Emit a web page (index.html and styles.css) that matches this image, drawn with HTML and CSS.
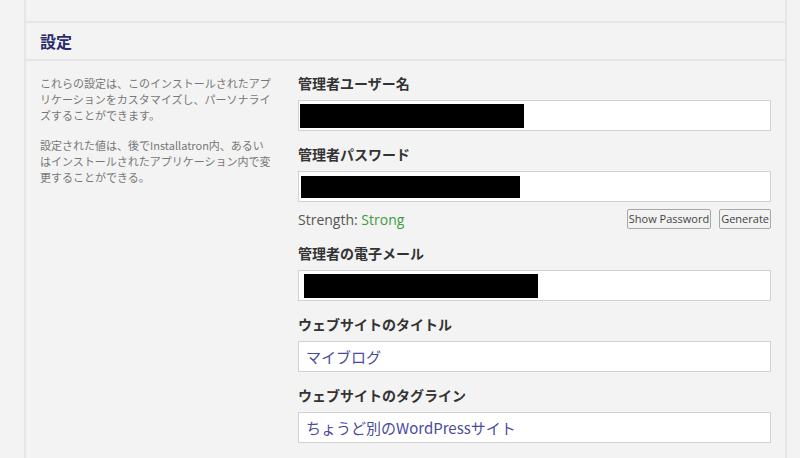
FILE: index.html
```html
<!DOCTYPE html>
<html lang="ja">
<head>
  <meta charset="UTF-8" />
  <meta name="viewport" content="width=device-width, initial-scale=1.0" />
  <title>設定</title>
  <link rel="stylesheet" href="styles.css">
</head>
<body>
  <div class="panel">
    <div class="prev-section"></div>
    <div class="section-head">
      <h2>設定</h2>
    </div>
    <div class="section-body">
      <div class="desc">
        <p>これらの設定は、このインストールされたアプリケーションをカスタマイズし、パーソナライズすることができます。</p>
        <p>設定された値は、後でInstallatron内、あるいはインストールされたアプリケーション内で変更することができる。</p>
      </div>
      <div class="form">
        <div class="field">
          <label class="field-label">管理者ユーザー名</label>
          <div class="field-input"><span class="redact redact-user"></span></div>
        </div>
        <div class="field">
          <label class="field-label">管理者パスワード</label>
          <div class="field-input"><span class="redact redact-pass"></span></div>
          <div class="strength-row">
            <span class="strength">Strength: <span class="strong">Strong</span></span>
            <div class="pw-buttons">
              <button class="small-btn">Show Password</button>
              <button class="small-btn">Generate</button>
            </div>
          </div>
        </div>
        <div class="field">
          <label class="field-label">管理者の電子メール</label>
          <div class="field-input"><span class="redact redact-mail"></span></div>
        </div>
        <div class="field">
          <label class="field-label">ウェブサイトのタイトル</label>
          <div class="field-input">マイブログ</div>
        </div>
        <div class="field">
          <label class="field-label">ウェブサイトのタグライン</label>
          <div class="field-input">ちょうど別のWordPressサイト</div>
        </div>
      </div>
    </div>
  </div>
</body>
</html>
```

FILE: styles.css
```css
* {
  box-sizing: border-box;
  margin: 0;
  padding: 0;
}
body {
  background-color: #f3f3f3;
  color: #333;
  font-family: 'Open Sans', 'Noto Sans CJK JP', sans-serif;
  overflow: hidden;
}
.panel {
  margin-left: 24px;
  width: 763px;
  min-height: 458px;
  border-left: 2px solid #e6e6e6;
  border-right: 2px solid #e6e6e6;
}
.prev-section {
  height: 23px;
  border-bottom: 2px solid #e6e6e6;
}
.section-head {
  height: 38px;
  padding-left: 14px;
  display: flex;
  align-items: center;
  border-bottom: 2px solid #e6e6e6;
}
.section-head h2 {
  font-family: 'Noto Sans CJK JP', sans-serif;
  font-size: 16px;
  font-weight: bold;
  color: #2b2b6c;
}
.section-body {
  display: flex;
  padding: 12px 14px 0 14px;
}
.desc {
  width: 232px;
  margin-right: 26px;
  flex-shrink: 0;
  font-family: 'Noto Sans CJK JP', sans-serif;
  font-size: 11px;
  line-height: 16px;
  color: #777;
  padding-top: 2px;
}
.desc p {
  margin-bottom: 14px;
}
.form {
  flex: 1;
}
.field {
  margin-bottom: 13px;
}
.field-label {
  display: block;
  font-family: 'Noto Sans CJK JP', sans-serif;
  font-size: 14px;
  font-weight: bold;
  line-height: 20px;
  color: #333;
  margin-bottom: 7px;
}
.field-input {
  height: 31px;
  background-color: #fff;
  border: 1px solid #d2d2d2;
  display: flex;
  align-items: center;
  padding-left: 7px;
  font-family: 'Noto Sans CJK JP', sans-serif;
  font-size: 15px;
  color: #4a4a9e;
}
.redact {
  display: block;
  background-color: #000;
}
.redact-user {
  width: 224px;
  height: 24px;
  margin-left: -6px;
}
.redact-pass {
  width: 219px;
  height: 22px;
  margin-left: -5px;
}
.redact-mail {
  width: 234px;
  height: 24px;
  margin-left: -2px;
}
.strength-row {
  display: flex;
  justify-content: space-between;
  align-items: center;
  height: 22px;
  margin-top: 6px;
  margin-bottom: 1px;
}
.strength {
  font-size: 14px;
  color: #555;
}
.strong {
  color: #3f9a3f;
}
.pw-buttons {
  display: flex;
  gap: 8px;
}
.small-btn {
  font-family: 'Open Sans', sans-serif;
  font-size: 11px;
  color: #444;
  background-color: #f2f2f2;
  border: 1px solid #a8a8a8;
  border-radius: 2px;
  height: 20px;
  padding: 0 1px;
  line-height: 18px;
}
```
